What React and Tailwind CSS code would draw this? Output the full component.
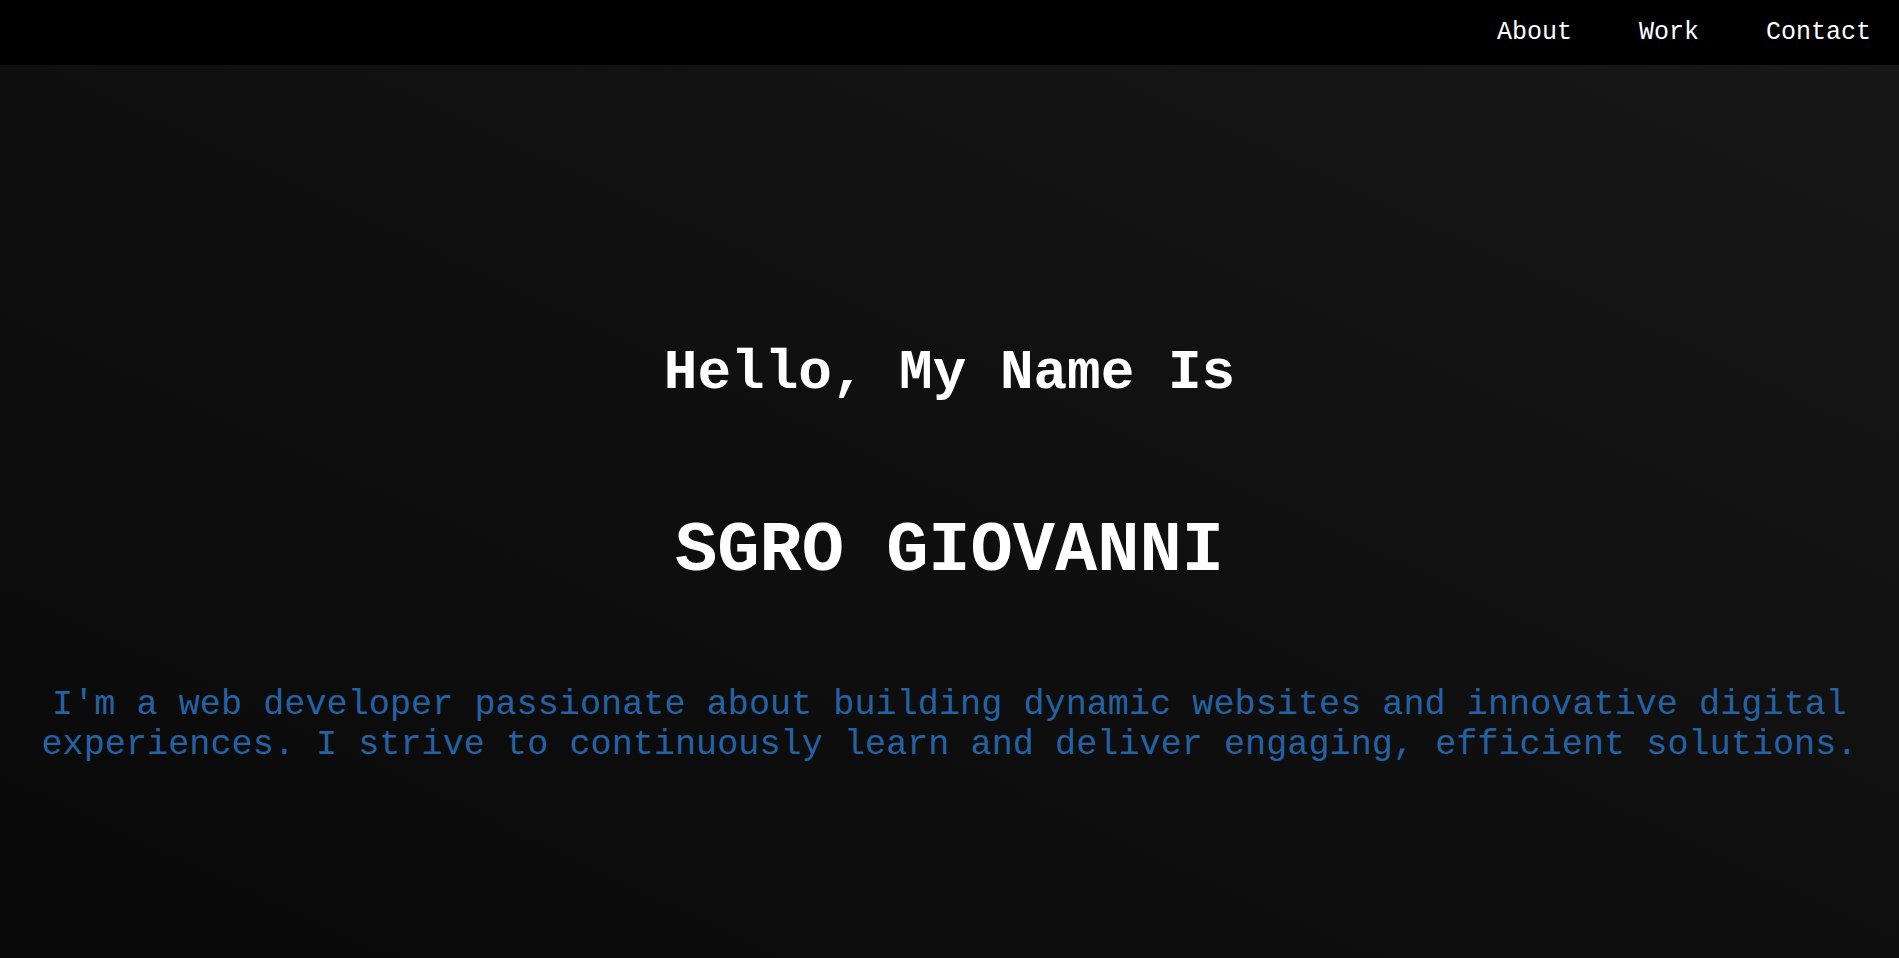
import React from 'react';

const links = ['About', 'Work', 'Contact'];

export default function App() {
  return (
    <div className="min-h-screen w-full flex flex-col bg-black font-['Courier_New','Liberation_Mono',monospace]">
      {/* Top Navigation */}
      <nav className="h-[65px] w-full flex items-center justify-end gap-[67px] pr-[28px] bg-black">
        {links.map((label) => (
          <a key={label} href="#" className="text-[25px] leading-[normal] text-white">
            {label}
          </a>
        ))}
      </nav>

      {/* Hero */}
      <main className="h-[893px] w-full flex flex-col items-center pt-[276px] px-[20px] bg-linear-to-tr from-[#090909] via-[#0f0f0f] to-[#171717]">
        <h1 className="text-[56px] leading-[normal] font-bold text-white mb-[106px]">
          Hello, My Name Is
        </h1>
        <h2 className="text-[70.4px] leading-[normal] font-bold text-white mb-[94px]">
          SGRO GIOVANNI
        </h2>
        <p className="text-[35.2px] leading-[normal] text-center text-[#2462a3]">
          I'm a web developer passionate about building dynamic websites and innovative digital experiences. I strive to continuously learn and deliver engaging, efficient solutions.
        </p>
      </main>
    </div>
  );
}
